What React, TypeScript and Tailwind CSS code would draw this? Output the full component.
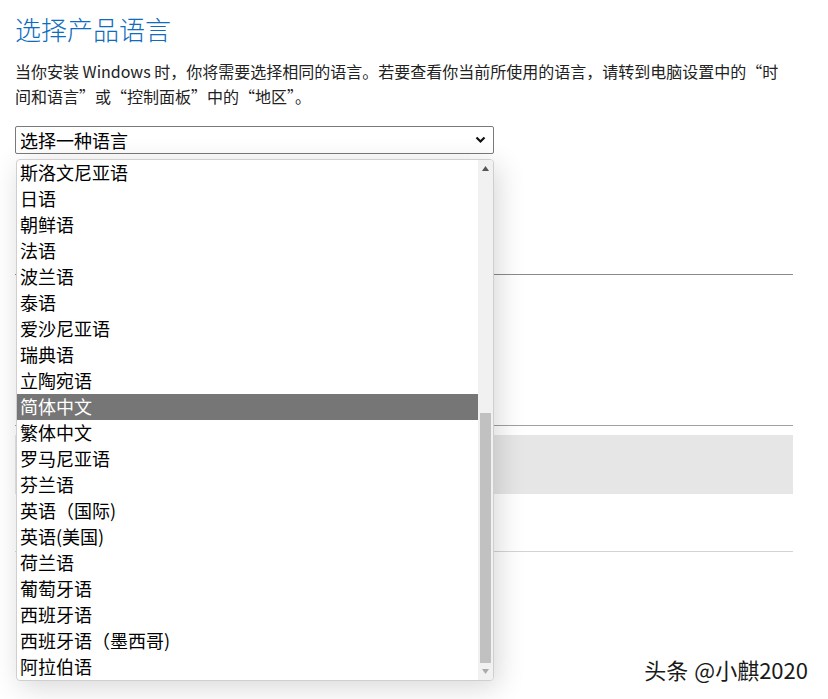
const languages = [
  "斯洛文尼亚语",
  "日语",
  "朝鲜语",
  "法语",
  "波兰语",
  "泰语",
  "爱沙尼亚语",
  "瑞典语",
  "立陶宛语",
  "简体中文",
  "繁体中文",
  "罗马尼亚语",
  "芬兰语",
  "英语（国际)",
  "英语(美国)",
  "荷兰语",
  "葡萄牙语",
  "西班牙语",
  "西班牙语（墨西哥)",
  "阿拉伯语",
];

export default function App() {
  return (
    <div className="relative w-[828px] h-[699px] overflow-hidden bg-white font-['Microsoft_YaHei','Noto_Sans_CJK_SC',sans-serif] text-[#1a1a1a]">
      {/* page content behind the open list */}
      <div className="pl-[15px] pr-[35px] pt-[11px]">
        <h1 className="text-[26px] leading-[36px] font-light text-[#0f6cbd]">选择产品语言</h1>
        <p className="mt-[12px] text-[16px] leading-[25px] text-[#222]">
          当你安装 Windows 时，你将需要选择相同的语言。若要查看你当前所使用的语言，请转到电脑设置中的“时间和语言”或“控制面板”中的“地区”。
        </p>
        <div className="mt-[17px] w-[479px] h-[28px] flex items-center justify-between border border-[#7a7a7a] rounded-[2px] pl-[4px] pr-[7px]">
          <span className="text-[18px] leading-none text-black">选择一种语言</span>
          <svg width="11" height="8" viewBox="0 0 11 8">
            <path d="M1.5 1.5 L5.5 5.5 L9.5 1.5" fill="none" stroke="#111" strokeWidth="2.2" />
          </svg>
        </div>
        <div className="h-[120px]" />
        <div className="border-t border-[#8a8a8a]" />
        <div className="h-[150px]" />
        <div className="border-t border-[#a0a0a0]" />
        <div className="mt-[9px] h-[59px] bg-[#e6e6e6]" />
        <div className="h-[57px]" />
        <div className="border-t border-[#d4d4d4]" />
      </div>

      {/* open dropdown list */}
      <div className="absolute left-[16px] top-[159px] w-[478px] h-[522px] flex border border-[#cfcfcf] rounded-[4px] bg-white shadow-[4px_6px_28px_rgba(0,0,0,0.16)] overflow-hidden">
        <ul className="flex-1">
          {languages.map((l) => (
            <li
              key={l}
              className={
                l === "简体中文"
                  ? "h-[26px] pl-[3px] text-[18px] leading-[25px] bg-[#767676] text-white"
                  : "h-[26px] pl-[3px] text-[18px] leading-[25px] text-black"
              }
            >
              {l}
            </li>
          ))}
        </ul>
        <div className="w-[15px] flex flex-col bg-[#f1f1f1]">
          <div className="h-[17px] flex items-center justify-center">
            <svg width="7" height="5" viewBox="0 0 7 5">
              <path d="M0 5 L3.5 0 L7 5 Z" fill="#555" />
            </svg>
          </div>
          <div className="h-[236px]" />
          <div className="flex-1 mx-[2px] bg-[#c1c1c1]" />
          <div className="h-[17px] flex items-center justify-center">
            <svg width="7" height="5" viewBox="0 0 7 5">
              <path d="M0 0 L7 0 L3.5 5 Z" fill="#aaa" />
            </svg>
          </div>
        </div>
      </div>

      {/* watermark */}
      <div className="absolute right-[20px] bottom-[19px] flex gap-[6px] text-[22px] leading-none text-[#1a1a1a] [text-shadow:0_0_2px_#fff,1px_1px_1px_#fff]">
        <span>头条</span>
        <span>@小麒2020</span>
      </div>
    </div>
  );
}
